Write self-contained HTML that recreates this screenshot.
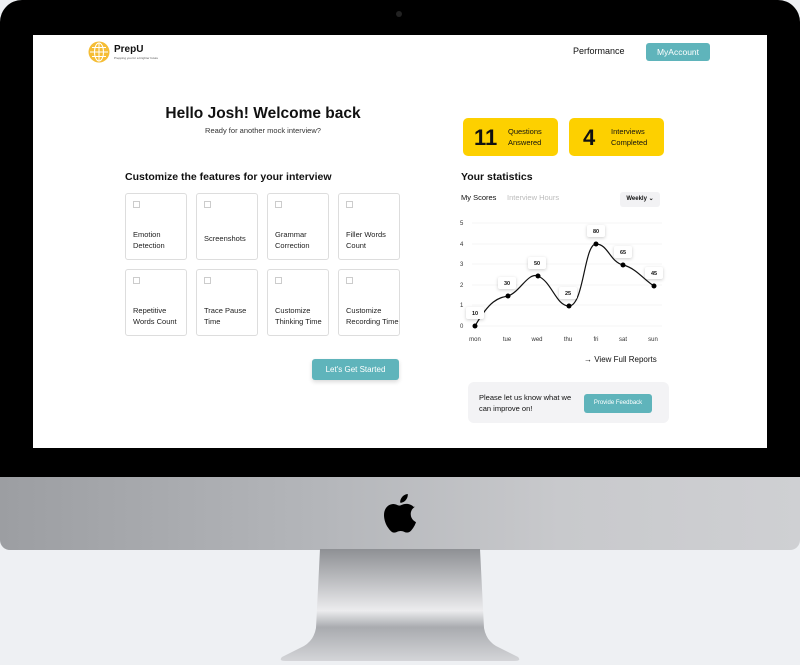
<!DOCTYPE html>
<html><head><meta charset="utf-8"><style>
*{margin:0;padding:0;box-sizing:border-box}
body{width:800px;height:665px;background:#eef0f3;position:relative;overflow:hidden;font-family:"Liberation Sans",Arial,sans-serif;color:#111}
.bezel{position:absolute;left:0;top:0;width:800px;height:478px;background:#000;border-radius:22px 22px 0 0}
.cam{position:absolute;left:396px;top:11px;width:6px;height:6px;border-radius:50%;background:#222}
.chin{position:absolute;left:0;top:477px;width:800px;height:73px;border-radius:0 0 10px 10px;background:linear-gradient(90deg,#9c9ea2,#b4b6ba 40%,#c8c9cc 70%,#cfd0d3)}
.screen{position:absolute;left:33px;top:35px;width:734px;height:413px;background:#fff}
.a{position:absolute}
.card{position:absolute;width:62px;height:67px;border:1px solid #ddd;border-radius:3px;font-size:7.5px;line-height:11px;color:#222}
.card i{position:absolute;left:7px;top:7px;width:7px;height:7px;border:1px solid #ccc}
.card span{position:absolute;left:7px;bottom:8px}
.yel{position:absolute;background:#fdd000;border-radius:5px;height:38px;top:118px}
.yel b{position:absolute;font-size:22px;top:7px}
.yel span{position:absolute;font-size:7.5px;line-height:11px;top:8px}
.btn{background:#5fb4bb;color:#fff;border-radius:3px;text-align:center}
</style></head><body>
<div class="bezel"><div class="cam"></div></div>
<div class="screen"></div>
<svg class="a" style="left:88px;top:41px" width="22" height="22" viewBox="0 0 22 22"><circle cx="11" cy="11" r="10.5" fill="#f5bd35"/><g fill="none" stroke="#fff" stroke-width="1"><ellipse cx="11" cy="11" rx="4.5" ry="9"/><line x1="11" y1="2" x2="11" y2="20"/><line x1="2" y1="11" x2="20" y2="11"/><line x1="4" y1="6.5" x2="18" y2="6.5"/><line x1="4" y1="15.5" x2="18" y2="15.5"/></g></svg>
<div class="a" style="left:114px;top:44px;font-size:10px;font-weight:bold">PrepU</div>
<div class="a" style="left:114px;top:56px;font-size:3px;color:#555">Prepping you for a brighter future</div>
<div class="a" style="left:573px;top:46px;font-size:9px">Performance</div>
<div class="a btn" style="left:646px;top:43px;width:64px;height:18px;font-size:8.5px;line-height:18px">MyAccount</div>
<div class="a" style="left:125px;top:105px;width:276px;text-align:center;font-size:15.5px;font-weight:bold">Hello Josh! Welcome back</div>
<div class="a" style="left:125px;top:126px;width:276px;text-align:center;font-size:7.5px;color:#333">Ready for another mock interview?</div>
<div class="yel" style="left:463px;width:95px"><b style="left:11px">11</b><span style="left:45px">Questions<br>Answered</span></div>
<div class="yel" style="left:569px;width:95px"><b style="left:14px">4</b><span style="left:42px">Interviews<br>Completed</span></div>
<div class="a" style="left:125px;top:171px;font-size:10.5px;font-weight:bold">Customize the features for your interview</div>
<div class="card" style="left:125px;top:193px"><i></i><span>Emotion<br>Detection</span></div>
<div class="card" style="left:196px;top:193px"><i></i><span style="bottom:15px">Screenshots</span></div>
<div class="card" style="left:267px;top:193px"><i></i><span>Grammar<br>Correction</span></div>
<div class="card" style="left:338px;top:193px"><i></i><span>Filler Words<br>Count</span></div>
<div class="card" style="left:125px;top:269px"><i></i><span>Repetitive<br>Words Count</span></div>
<div class="card" style="left:196px;top:269px"><i></i><span>Trace Pause<br>Time</span></div>
<div class="card" style="left:267px;top:269px"><i></i><span>Customize<br>Thinking Time</span></div>
<div class="card" style="left:338px;top:269px"><i></i><span>Customize<br>Recording Time</span></div>
<div class="a btn" style="left:312px;top:359px;width:87px;height:21px;font-size:8px;line-height:21px;box-shadow:0 2px 4px rgba(0,0,0,.15)">Let's Get Started</div>
<div class="a" style="left:461px;top:171px;font-size:10.5px;font-weight:bold">Your statistics</div>
<div class="a" style="left:461px;top:193px;font-size:7.5px">My Scores</div>
<div class="a" style="left:507px;top:193px;font-size:7.5px;color:#bbb">Interview Hours</div>
<div class="a" style="left:620px;top:192px;width:40px;height:15px;background:#f2f2f4;border-radius:3px;font-size:6px;font-weight:bold;line-height:15px;text-align:center">Weekly ⌄</div>
<svg class="a" style="left:455px;top:215px" width="215" height="135" viewBox="455 215 215 135" font-family="Liberation Sans,Arial,sans-serif" font-size="6">
<g stroke="#eee" stroke-width="0.6"><line x1="472" y1="223" x2="662" y2="223"/><line x1="472" y1="244" x2="662" y2="244"/><line x1="472" y1="264" x2="662" y2="264"/><line x1="472" y1="285" x2="662" y2="285"/><line x1="472" y1="305" x2="662" y2="305"/><line x1="472" y1="326" x2="662" y2="326"/></g>
<g fill="#333"><text x="460" y="225">5</text><text x="460" y="246">4</text><text x="460" y="266">3</text><text x="460" y="287">2</text><text x="460" y="307">1</text><text x="460" y="328">0</text></g>
<g fill="#333" text-anchor="middle"><text x="475" y="341">mon</text><text x="507" y="341">tue</text><text x="537" y="341">wed</text><text x="568" y="341">thu</text><text x="596" y="341">fri</text><text x="623" y="341">sat</text><text x="653" y="341">sun</text></g>
<path d="M475 326 C490 300 498 298 508 296 C520 292 528 272 538 276 C552 282 556 306 569 306 C584 306 584 244 596 244 C608 244 610 262 623 265 C636 268 644 280 654 286" fill="none" stroke="#111" stroke-width="1.2"/>
<g fill="#000"><circle cx="475" cy="326" r="2.5"/><circle cx="508" cy="296" r="2.5"/><circle cx="538" cy="276" r="2.5"/><circle cx="569" cy="306" r="2.5"/><circle cx="596" cy="244" r="2.5"/><circle cx="623" cy="265" r="2.5"/><circle cx="654" cy="286" r="2.5"/></g>
<g fill="#fff" style="filter:drop-shadow(0 1px 1.5px rgba(0,0,0,.2))"><rect x="466" y="307" width="18" height="12" rx="2"/><rect x="498" y="277" width="18" height="12" rx="2"/><rect x="528" y="257" width="18" height="12" rx="2"/><rect x="559" y="287" width="18" height="12" rx="2"/><rect x="587" y="225" width="18" height="12" rx="2"/><rect x="614" y="246" width="18" height="12" rx="2"/><rect x="645" y="267" width="18" height="12" rx="2"/></g>
<g font-weight="bold" font-size="5.5" text-anchor="middle" fill="#111"><text x="475" y="315">10</text><text x="507" y="285">30</text><text x="537" y="265">50</text><text x="568" y="295">25</text><text x="596" y="233">80</text><text x="623" y="254">65</text><text x="654" y="275">45</text></g>
</svg>
<div class="a" style="left:584px;top:355px;font-size:8px">→ View Full Reports</div>
<div class="a" style="left:468px;top:382px;width:201px;height:41px;background:#f3f3f5;border-radius:6px"></div>
<div class="a" style="left:479px;top:392px;font-size:7.5px;line-height:11px">Please let us know what we<br>can improve on!</div>
<div class="a btn" style="left:584px;top:394px;width:68px;height:19px;font-size:6px;line-height:19px">Provide Feedback</div>
<div class="chin"></div>
<svg class="a" style="left:384px;top:493px" width="32" height="40" viewBox="0 0 814 1000"><path fill="#000" d="M788 340c-6 4-108 62-108 190 0 148 130 200 134 202-1 3-21 72-69 142-43 61-88 123-156 123s-86-40-164-40c-77 0-104 41-167 41s-106-57-156-127C44 789 0 668 0 553 0 369 120 271 238 271c63 0 115 41 154 41 38 0 97-44 168-44 27 0 124 3 188 72zM555 168c30-35 51-84 51-133 0-7-1-14-2-19-48 2-106 32-140 73-27 31-53 80-53 130 0 8 1 15 2 18 3 1 8 1 13 1 43 0 97-29 129-70z"/></svg>
<svg class="a" style="left:270px;top:549px" width="260" height="116" viewBox="270 549 260 116">
<defs><linearGradient id="g" x1="0" y1="0" x2="0" y2="1"><stop offset="0" stop-color="#8e9094"/><stop offset=".3" stop-color="#c0c1c4"/><stop offset=".55" stop-color="#ececee"/><stop offset=".7" stop-color="#a9abaf"/><stop offset="1" stop-color="#d4d5d8"/></linearGradient></defs>
<path d="M320 549 L480 549 L484 628 Q486 640 496 646 L518 657 Q522 661 514 661 L286 661 Q278 661 282 657 L304 646 Q314 640 316 628 Z" fill="url(#g)"/>
</svg>
</body></html>
